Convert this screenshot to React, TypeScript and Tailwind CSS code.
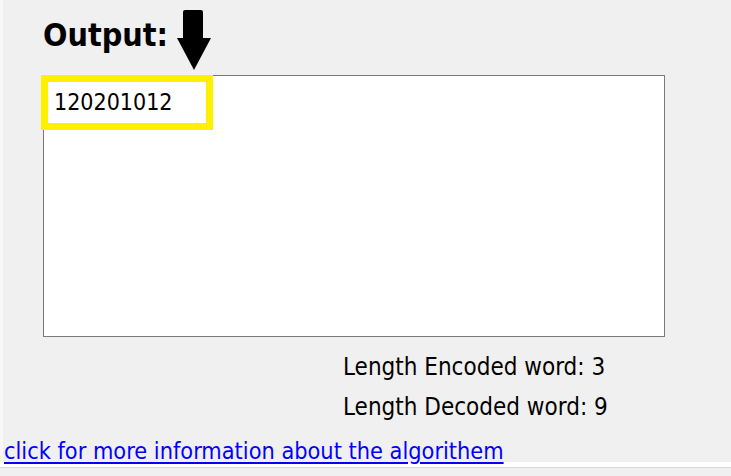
const App = () => {
  const font = { fontFamily: '"DejaVu Sans Condensed", "DejaVu Sans", sans-serif' };

  return (
    <div className="w-[731px] h-[476px] bg-[#f8f8f8] overflow-hidden" style={font}>
      <div className="ml-[3px] h-[462px] bg-[#f0f0f0] pl-[40px] flex flex-col">
        {/* header */}
        <div className="h-[75px] shrink-0 flex items-start">
          <div className="mt-[19px] text-[32px] leading-[32px] font-bold text-black font-stretch-condensed">
            Output:
          </div>
          <svg className="ml-[8px] mt-[9px]" width="36" height="62" viewBox="0 0 36 62">
            <path d="M9 1 H25 Q27 1 27 3 V29 H35 L18 61 L1 29 H7 V3 Q7 1 9 1 Z" fill="#000" />
          </svg>
        </div>

        {/* output area */}
        <div className="relative shrink-0 w-[622px] h-[262px] border border-[#7a7a7a] bg-white">
          <div className="absolute -left-[3px] -top-[1px] w-[172px] h-[55px] border-[7px] border-[#fff000] bg-white pl-[6px] flex items-center">
            <span className="text-[23px] leading-none text-black font-stretch-condensed">120201012</span>
          </div>
        </div>

        {/* lengths */}
        <div className="shrink-0 mt-[10px] ml-[300px] text-[24px] leading-[40px] text-black font-stretch-condensed">
          <div>Length Encoded word: 3</div>
          <div>Length Decoded word: 9</div>
        </div>

        <a
          href="#"
          className="shrink-0 self-start -ml-[39px] mt-[10px] text-[23.3px] leading-[28px] text-[#0000ff] underline underline-offset-[3px] font-stretch-condensed"
        >
          click for more information about the algorithem
        </a>
      </div>
      <div className="h-[5px] bg-white" />
      <div className="h-[9px] border-t border-[#dadada] bg-[#f0f0f0]" />
    </div>
  );
};

export default App;
